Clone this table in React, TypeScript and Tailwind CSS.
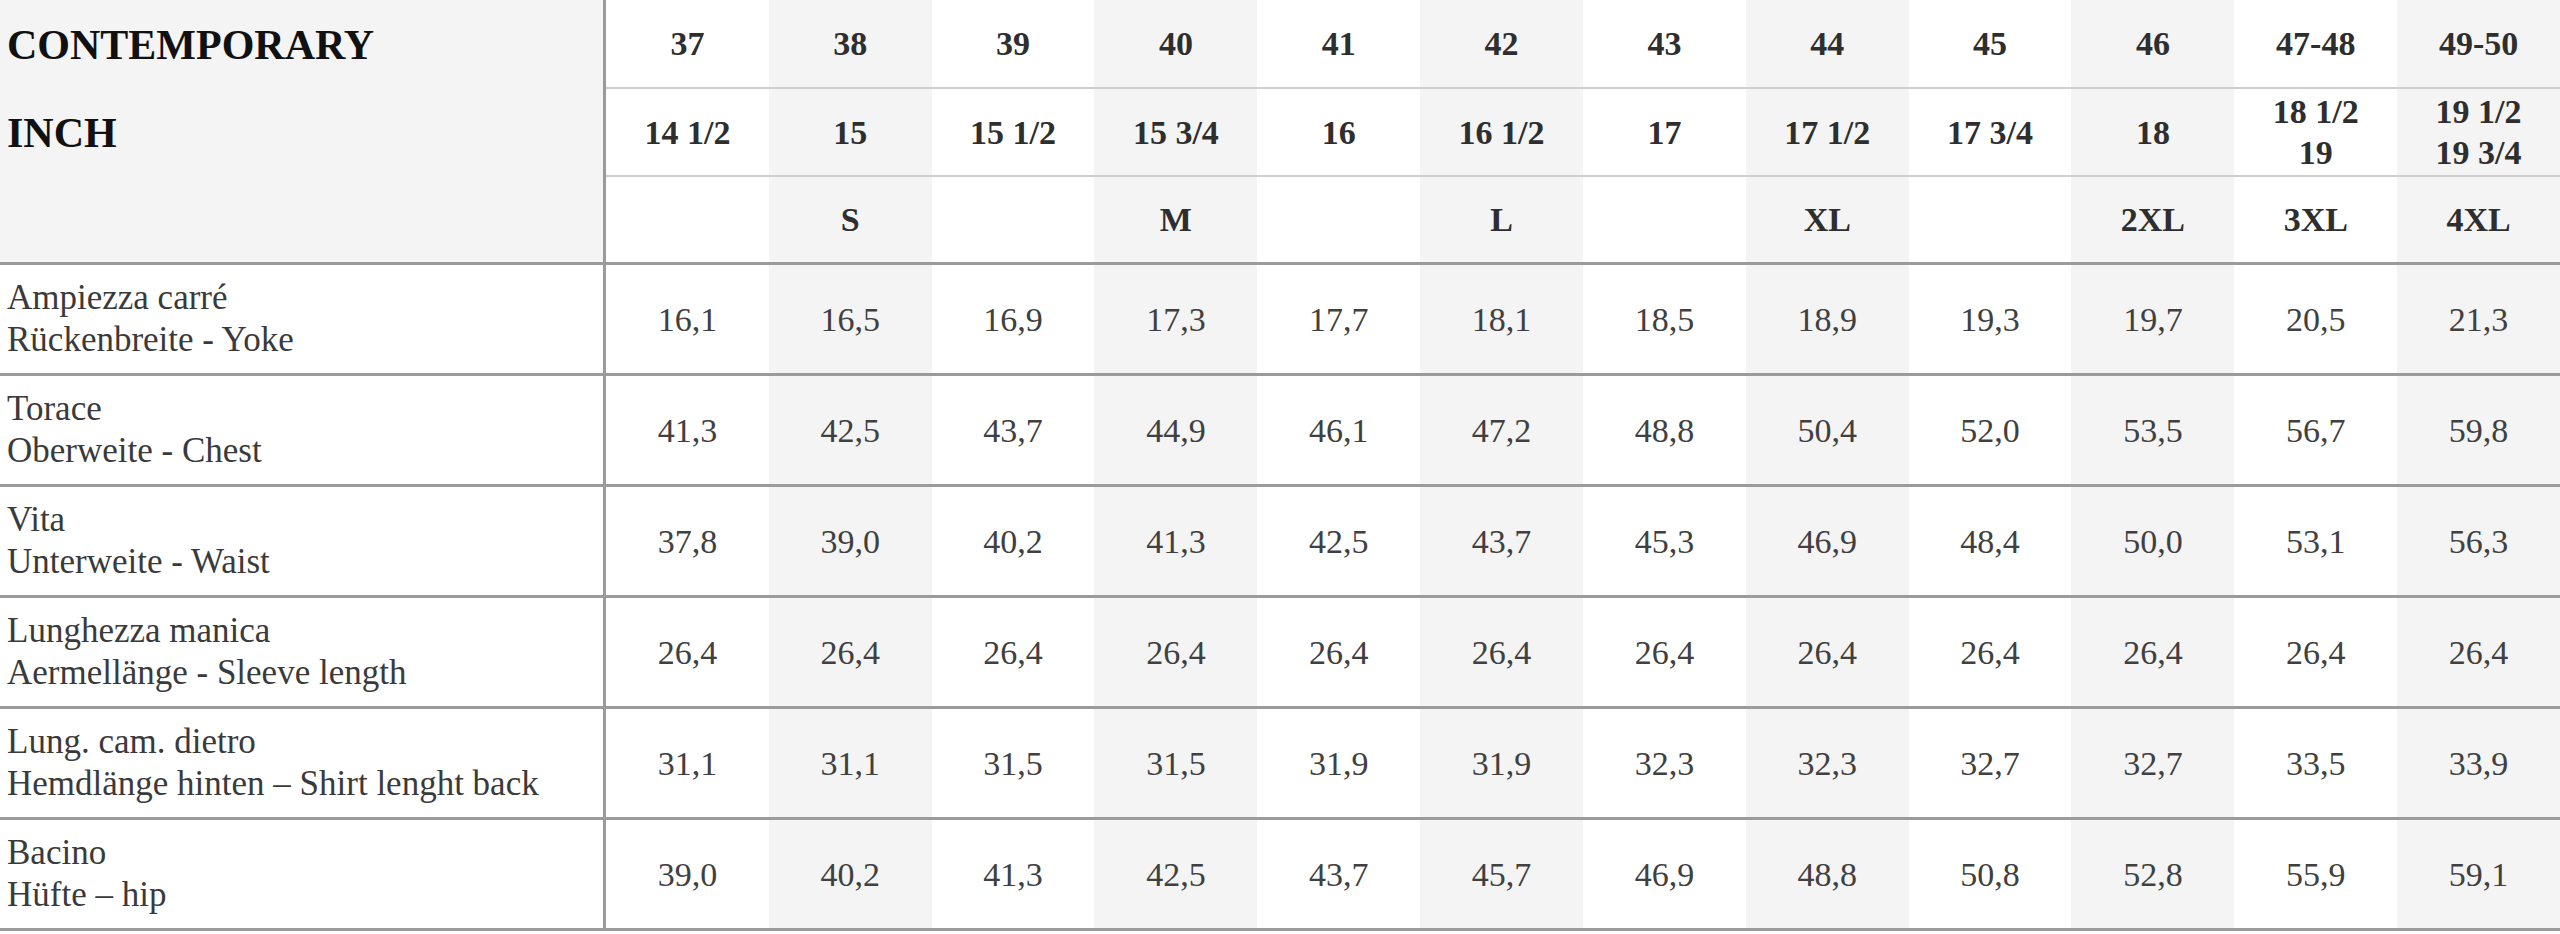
const sizes = ["37", "38", "39", "40", "41", "42", "43", "44", "45", "46", "47-48", "49-50"];
const inches = ["14 1/2", "15", "15 1/2", "15 3/4", "16", "16 1/2", "17", "17 1/2", "17 3/4", "18", "18 1/2\n19", "19 1/2\n19 3/4"];
const letters = ["", "S", "", "M", "", "L", "", "XL", "", "2XL", "3XL", "4XL"];

const rows = [
  { it: "Ampiezza carré", de: "Rückenbreite - Yoke", v: ["16,1", "16,5", "16,9", "17,3", "17,7", "18,1", "18,5", "18,9", "19,3", "19,7", "20,5", "21,3"] },
  { it: "Torace", de: "Oberweite - Chest", v: ["41,3", "42,5", "43,7", "44,9", "46,1", "47,2", "48,8", "50,4", "52,0", "53,5", "56,7", "59,8"] },
  { it: "Vita", de: "Unterweite - Waist", v: ["37,8", "39,0", "40,2", "41,3", "42,5", "43,7", "45,3", "46,9", "48,4", "50,0", "53,1", "56,3"] },
  { it: "Lunghezza manica", de: "Aermellänge - Sleeve length", v: ["26,4", "26,4", "26,4", "26,4", "26,4", "26,4", "26,4", "26,4", "26,4", "26,4", "26,4", "26,4"] },
  { it: "Lung. cam. dietro", de: "Hemdlänge hinten – Shirt lenght back", v: ["31,1", "31,1", "31,5", "31,5", "31,9", "31,9", "32,3", "32,3", "32,7", "32,7", "33,5", "33,9"] },
  { it: "Bacino", de: "Hüfte – hip", v: ["39,0", "40,2", "41,3", "42,5", "43,7", "45,7", "46,9", "48,8", "50,8", "52,8", "55,9", "59,1"] },
];

const grid = "grid grid-cols-[606px_repeat(12,minmax(0,1fr))]";

function shade(i: number) {
  return i % 2 === 1 ? "bg-[#f4f4f4]" : "bg-white";
}

function HeadRow({ label, cells, h, line }: { label: string; cells: string[]; h: string; line: string }) {
  return (
    <div className={grid}>
      <div className={`${h} bg-[#f4f4f4] border-r-[3px] border-[#9b9b9b] flex items-center pl-[7px] text-[42px] font-bold text-[#111] leading-none`}>
        {label}
      </div>
      {cells.map((c, i) => (
        <div
          key={i}
          className={`${h} ${shade(i)} ${line} flex flex-col items-center justify-center text-[34px] font-bold text-[#2e2e2e] leading-[41px] whitespace-pre text-center`}
        >
          {c}
        </div>
      ))}
    </div>
  );
}

export default function App() {
  return (
    <div className="w-[2560px] h-[934px] bg-white font-['Liberation_Serif',serif] overflow-hidden">
      <HeadRow label="CONTEMPORARY" cells={sizes} h="h-[89px]" line="border-b-2 border-[#cfcfcf]" />
      <HeadRow label="INCH" cells={inches} h="h-[88px]" line="border-b-2 border-[#cfcfcf]" />
      <div className={`${grid} border-b-[3px] border-[#9b9b9b]`}>
        <div className="h-[85px] bg-[#f4f4f4] border-r-[3px] border-[#9b9b9b]" />
        {letters.map((c, i) => (
          <div key={i} className={`h-[85px] ${shade(i)} flex items-center justify-center text-[34px] font-bold text-[#2e2e2e]`}>
            {c}
          </div>
        ))}
      </div>
      {rows.map((r) => (
        <div key={r.it} className={`${grid} border-b-[3px] border-[#9b9b9b]`}>
          <div className="h-[108px] border-r-[3px] border-[#9b9b9b] flex flex-col justify-center pl-[7px] text-[35px] leading-[42px] text-[#3a3a3a]">
            <span>{r.it}</span>
            <span>{r.de}</span>
          </div>
          {r.v.map((v, i) => (
            <div key={i} className={`h-[108px] ${shade(i)} flex items-center justify-center text-[34px] text-[#404040]`}>
              {v}
            </div>
          ))}
        </div>
      ))}
    </div>
  );
}
